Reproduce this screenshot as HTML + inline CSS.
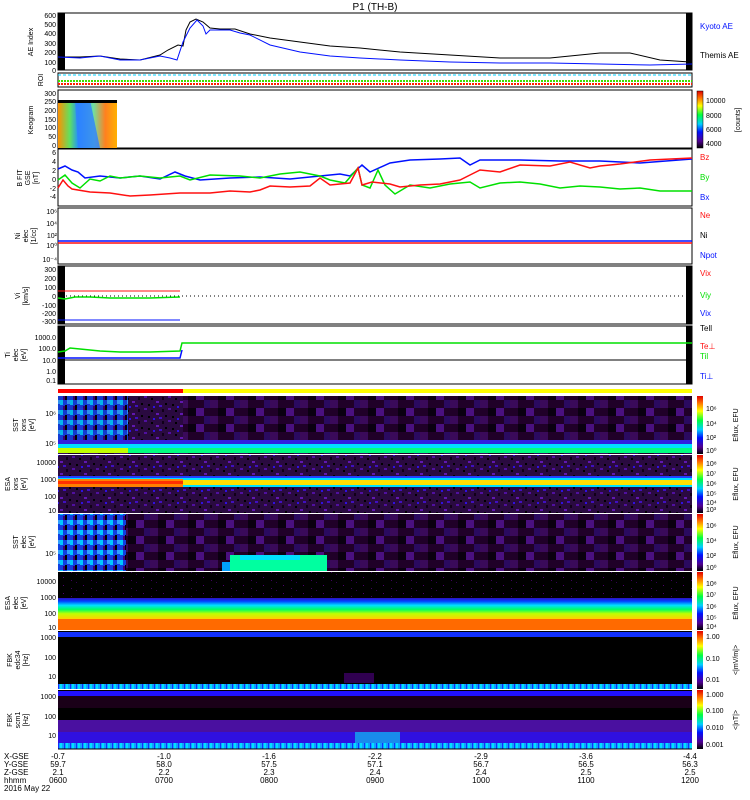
<!DOCTYPE html>
<html><head><style>
body{margin:0;background:#fff;}
svg{display:block;font-family:"Liberation Sans",sans-serif;}
</style></head><body>
<svg width="750" height="800" viewBox="0 0 750 800" xmlns="http://www.w3.org/2000/svg">
<defs>
<pattern id="pn" width="24" height="12" patternUnits="userSpaceOnUse">
<rect width="24" height="12" fill="#2a0a40"/>
<rect x="0" y="0" width="3" height="2" fill="#5010a0"/><rect x="7" y="2" width="2" height="2" fill="#000"/>
<rect x="12" y="5" width="3" height="2" fill="#6018b0"/><rect x="18" y="1" width="2" height="3" fill="#100018"/>
<rect x="4" y="8" width="2" height="2" fill="#000"/><rect x="15" y="9" width="3" height="2" fill="#4010c0"/>
<rect x="21" y="7" width="2" height="2" fill="#000"/><rect x="9" y="10" width="2" height="2" fill="#3010e0"/>
</pattern>
<pattern id="pb" width="30" height="16" patternUnits="userSpaceOnUse">
<rect width="30" height="16" fill="#200028"/>
<rect x="0" y="0" width="8" height="8" fill="#3a0a5a"/><rect x="16" y="8" width="8" height="8" fill="#4a1080"/>
<rect x="8" y="8" width="8" height="8" fill="#0a0010"/><rect x="24" y="0" width="6" height="8" fill="#2a0a60"/>
</pattern>
<pattern id="pc" width="10" height="10" patternUnits="userSpaceOnUse">
<rect width="10" height="10" fill="#1040e0"/><rect x="0" y="0" width="3" height="5" fill="#00c8ff"/>
<rect x="5" y="5" width="2" height="5" fill="#000"/><rect x="7" y="0" width="3" height="4" fill="#30a0ff"/><rect x="3" y="6" width="2" height="4" fill="#40007a"/>
</pattern>
<pattern id="pk" width="20" height="8" patternUnits="userSpaceOnUse">
<rect width="20" height="8" fill="#000"/><rect x="3" y="1" width="1" height="1" fill="#500070"/><rect x="11" y="4" width="1" height="1" fill="#400060"/><rect x="16" y="6" width="1" height="1" fill="#300050"/>
</pattern>
<pattern id="pq" width="6" height="6" patternUnits="userSpaceOnUse">
<rect width="6" height="6" fill="#10a0ff"/><rect x="0" width="2" height="6" fill="#00e0ff"/><rect x="4" width="1" height="6" fill="#1030ff"/>
</pattern>
<linearGradient id="cb" x1="0" y1="1" x2="0" y2="0">
<stop offset="0" stop-color="#000"/><stop offset=".12" stop-color="#500090"/><stop offset=".28" stop-color="#0010ff"/>
<stop offset=".42" stop-color="#00d0ff"/><stop offset=".58" stop-color="#00ff40"/><stop offset=".74" stop-color="#ffff00"/>
<stop offset=".88" stop-color="#ff7000"/><stop offset="1" stop-color="#e00000"/></linearGradient>
<linearGradient id="kg" x1="0" y1="0" x2="1" y2="0">
<stop offset="0" stop-color="#ff9000"/><stop offset=".2" stop-color="#60e060"/><stop offset=".35" stop-color="#2090ff"/><stop offset=".6" stop-color="#70e0a0"/><stop offset=".8" stop-color="#ff8020"/><stop offset="1" stop-color="#ffb000"/></linearGradient>
<linearGradient id="ee" x1="0" y1="0" x2="0" y2="1">
<stop offset="0" stop-color="#3010c0"/><stop offset=".15" stop-color="#0040ff"/><stop offset=".35" stop-color="#00e0ff"/><stop offset=".55" stop-color="#00ff60"/><stop offset=".75" stop-color="#c0ff00"/><stop offset="1" stop-color="#ffd000"/></linearGradient>
</defs>
<text x="375" y="10" font-size="10" text-anchor="middle">P1 (TH-B)</text>

<!-- AE -->
<rect x="58" y="13" width="634" height="57" fill="#fff" stroke="#000"/>
<rect x="58" y="13" width="7" height="57" fill="#000"/><rect x="686" y="13" width="6" height="57" fill="#000"/>
<polyline fill="none" stroke="#000" points="58,57 80,57 100,56 120,59 140,60 160,55 168,50 178,45 183,46 186,30 190,22 196,19 203,22 210,28 220,29 235,29 250,34 270,38 300,42 330,46 360,48 400,52 450,55 500,58 550,58 570,56 600,53 630,53 660,60 690,62"/>
<polyline fill="none" stroke="#0010ff" points="58,57 80,58 100,56 120,60 140,60 160,56 170,58 177,60 183,42 190,28 197,20 203,26 206,34 210,30 230,30 240,33 250,35 270,45 300,52 330,56 360,58 400,60 450,62 500,63 550,63 600,64 650,65 692,64"/>
<text font-size="7" transform="translate(33,42) rotate(-90)" text-anchor="middle">AE Index</text>
<g font-size="7" text-anchor="end"><text x="56" y="18">600</text><text x="56" y="27">500</text><text x="56" y="36">400</text><text x="56" y="46">300</text><text x="56" y="55">200</text><text x="56" y="65">100</text><text x="56" y="73">0</text></g>
<text x="700" y="29" font-size="8" fill="#0010ff">Kyoto AE</text><text x="700" y="58" font-size="8">Themis AE</text>

<!-- ROI -->
<rect x="58" y="73" width="634" height="14" fill="#fff" stroke="#000"/>
<line x1="58" y1="75" x2="692" y2="75" stroke="#00d0ff" stroke-dasharray="3,2"/>
<line x1="58" y1="81" x2="692" y2="81" stroke="#40e000" stroke-width="2" stroke-dasharray="2,1"/>
<line x1="58" y1="84" x2="692" y2="84" stroke="#ff2000" stroke-width="2" stroke-dasharray="2,1"/>
<text font-size="7" transform="translate(43,80) rotate(-90)" text-anchor="middle">ROI</text>

<!-- Keogram -->
<rect x="58" y="90" width="634" height="58" fill="#fff" stroke="#000"/>
<rect x="58" y="100" width="59" height="48" fill="url(#kg)"/>
<path d="M75,100 L90,100 L100,148 L78,148 Z" fill="#3080ff" opacity=".8"/>
<rect x="58" y="100" width="59" height="3" fill="#000"/>
<text font-size="7" transform="translate(33,120) rotate(-90)" text-anchor="middle">Keogram</text>
<g font-size="7" text-anchor="end"><text x="56" y="96">300</text><text x="56" y="104">250</text><text x="56" y="113">200</text><text x="56" y="122">150</text><text x="56" y="130">100</text><text x="56" y="139">50</text><text x="56" y="148">0</text></g>
<rect x="697" y="91" width="6" height="57" fill="url(#cb)" stroke="#000" stroke-width=".5"/>
<g font-size="7"><text x="706" y="103">10000</text><text x="706" y="118">8000</text><text x="706" y="132">6000</text><text x="706" y="146">4000</text></g>
<text font-size="7" transform="translate(740,120) rotate(-90)" text-anchor="middle">[counts]</text>

<!-- B -->
<rect x="58" y="149" width="634" height="57" fill="#fff" stroke="#000"/>
<polyline fill="none" stroke="#0010ff" stroke-width="1.5" points="58,169 65,166 72,170 78,172 85,178 100,176 120,178 140,176 160,179 175,172 185,176 200,180 230,178 260,177 290,179 320,176 340,174 350,176 362,165 370,172 390,163 410,160 440,159 460,158 470,165 480,160 520,160 560,161 600,161 640,163 692,159"/>
<polyline fill="none" stroke="#00e000" stroke-width="1.5" points="58,180 65,175 72,183 80,188 90,179 100,181 110,176 120,178 140,176 160,178 180,176 190,180 210,175 240,176 260,178 280,174 300,172 320,176 330,180 345,183 358,168 362,185 370,188 378,170 385,185 395,194 410,185 430,188 450,184 470,182 480,188 500,183 520,182 540,184 560,188 580,186 600,187 620,189 640,188 660,191 692,191"/>
<polyline fill="none" stroke="#ff1010" stroke-width="1.5" points="58,188 63,180 68,186 72,189 90,192 110,193 130,196 150,195 180,193 210,193 230,191 250,192 260,190 270,186 290,187 310,186 320,178 330,185 350,183 358,168 362,185 372,182 390,184 400,187 420,185 440,184 460,180 470,175 480,170 500,172 520,165 550,166 570,162 590,168 600,166 620,164 650,160 692,158"/>
<text font-size="7" transform="translate(22,178) rotate(-90)" text-anchor="middle">B FIT</text>
<text font-size="7" transform="translate(30,178) rotate(-90)" text-anchor="middle">GSE</text>
<text font-size="7" transform="translate(38,178) rotate(-90)" text-anchor="middle">[nT]</text>
<g font-size="7" text-anchor="end"><text x="56" y="155">6</text><text x="56" y="164">4</text><text x="56" y="173">2</text><text x="56" y="182">0</text><text x="56" y="191">-2</text><text x="56" y="199">-4</text></g>
<text x="700" y="160" font-size="8" fill="#ff1010">Bz</text><text x="700" y="180" font-size="8" fill="#00e000">By</text><text x="700" y="200" font-size="8" fill="#0010ff">Bx</text>

<!-- Ni -->
<rect x="58" y="208" width="634" height="56" fill="#fff" stroke="#000"/>
<line x1="58" y1="241" x2="692" y2="241" stroke="#0010ff" stroke-width="1.5"/>
<line x1="58" y1="243" x2="692" y2="243" stroke="#ff1010" stroke-width="1.5"/>
<text font-size="7" transform="translate(20,236) rotate(-90)" text-anchor="middle">Ni</text>
<text font-size="7" transform="translate(28,236) rotate(-90)" text-anchor="middle">elec</text>
<text font-size="7" transform="translate(36,236) rotate(-90)" text-anchor="middle">[1/cc]</text>
<g font-size="7" text-anchor="end"><text x="57" y="214">10⁶</text><text x="57" y="226">10⁴</text><text x="57" y="238">10²</text><text x="57" y="248">10⁰</text><text x="57" y="262">10⁻⁴</text></g>
<text x="700" y="218" font-size="8" fill="#ff1010">Ne</text><text x="700" y="238" font-size="8">Ni</text><text x="700" y="258" font-size="8" fill="#0010ff">Npot</text>

<!-- Vi -->
<rect x="58" y="266" width="634" height="58" fill="#fff" stroke="#000"/>
<rect x="58" y="266" width="7" height="58" fill="#000"/><rect x="686" y="266" width="6" height="58" fill="#000"/>
<line x1="58" y1="296" x2="692" y2="296" stroke="#000" stroke-dasharray="1,3"/>
<line x1="58" y1="291" x2="180" y2="291" stroke="#ff1010"/>
<polyline fill="none" stroke="#00e000" stroke-width="1.5" points="58,298 65,299 75,297 90,297 110,298 130,298 150,298 180,297"/>
<line x1="58" y1="320" x2="180" y2="320" stroke="#0010ff"/>
<text font-size="7" transform="translate(20,296) rotate(-90)" text-anchor="middle">Vi</text>
<text font-size="7" transform="translate(28,296) rotate(-90)" text-anchor="middle">[km/s]</text>
<g font-size="7" text-anchor="end"><text x="56" y="272">300</text><text x="56" y="281">200</text><text x="56" y="290">100</text><text x="56" y="299">0</text><text x="56" y="308">-100</text><text x="56" y="316">-200</text><text x="56" y="324">-300</text></g>
<text x="700" y="276" font-size="8" fill="#ff1010">Vix</text><text x="700" y="298" font-size="8" fill="#00e000">Viy</text><text x="700" y="316" font-size="8" fill="#0010ff">Vix</text>

<!-- Ti -->
<rect x="58" y="326" width="634" height="58" fill="#fff" stroke="#000"/>
<rect x="58" y="326" width="7" height="58" fill="#000"/><rect x="686" y="326" width="6" height="58" fill="#000"/>
<line x1="58" y1="360" x2="692" y2="360" stroke="#000"/>
<polyline fill="none" stroke="#00e000" stroke-width="1.5" points="58,352 65,351 70,348 80,349 90,350 100,351 120,352 150,352 180,351 182,343 692,343"/>
<polyline fill="none" stroke="#0010ff" stroke-width="1.5" points="58,358 100,358 150,358 180,358 182,350"/>
<text font-size="7" transform="translate(10,355) rotate(-90)" text-anchor="middle">Ti</text>
<text font-size="7" transform="translate(18,355) rotate(-90)" text-anchor="middle">elec</text>
<text font-size="7" transform="translate(26,355) rotate(-90)" text-anchor="middle">[eV]</text>
<g font-size="7" text-anchor="end"><text x="56" y="340">1000.0</text><text x="56" y="351">100.0</text><text x="56" y="363">10.0</text><text x="56" y="374">1.0</text><text x="56" y="383">0.1</text></g>
<text x="700" y="331" font-size="8">Tell</text><text x="700" y="349" font-size="8" fill="#ff1010">Te⊥</text><text x="700" y="359" font-size="8" fill="#00e000">Til</text><text x="700" y="379" font-size="8" fill="#0010ff">Ti⊥</text>

<!-- mode bar -->
<rect x="58" y="389" width="125" height="4" fill="#ff0000"/><rect x="183" y="389" width="509" height="4" fill="#ffff00"/>

<!-- SST ion -->
<rect x="58" y="396" width="634" height="58" fill="url(#pb)"/>
<rect x="58" y="396" width="70" height="50" fill="url(#pc)" opacity=".9"/>
<rect x="128" y="396" width="55" height="50" fill="url(#pn)"/>
<rect x="58" y="440" width="634" height="4" fill="#3020e0"/>
<rect x="58" y="444" width="634" height="4" fill="#00e0ff"/>
<rect x="58" y="448" width="634" height="5" fill="#00ff80"/>
<rect x="58" y="448" width="70" height="5" fill="#c0ff00"/>
<text font-size="7" transform="translate(18,425) rotate(-90)" text-anchor="middle">SST</text>
<text font-size="7" transform="translate(26,425) rotate(-90)" text-anchor="middle">ions</text>
<text font-size="7" transform="translate(34,425) rotate(-90)" text-anchor="middle">[eV]</text>
<g font-size="7" text-anchor="end"><text x="56" y="416">10⁶</text><text x="56" y="446">10⁵</text></g>
<!-- ESA ion -->
<rect x="58" y="455" width="634" height="58" fill="url(#pn)"/>
<rect x="58" y="476" width="634" height="2" fill="#2040ff"/>
<rect x="58" y="478" width="634" height="2" fill="#00e0ff"/>
<rect x="58" y="480" width="634" height="5" fill="#ffe000"/>
<rect x="58" y="485" width="634" height="2" fill="#00e0ff"/>
<rect x="58" y="479" width="125" height="8" fill="#ff8000"/>
<rect x="58" y="481" width="125" height="3" fill="#ff3000"/>
<text font-size="7" transform="translate(10,484) rotate(-90)" text-anchor="middle">ESA</text>
<text font-size="7" transform="translate(18,484) rotate(-90)" text-anchor="middle">ions</text>
<text font-size="7" transform="translate(26,484) rotate(-90)" text-anchor="middle">[eV]</text>
<g font-size="7" text-anchor="end"><text x="56" y="465">10000</text><text x="56" y="482">1000</text><text x="56" y="499">100</text><text x="56" y="513">10</text></g>
<!-- SST elec -->
<rect x="58" y="514" width="634" height="57" fill="url(#pb)"/>
<rect x="58" y="514" width="68" height="57" fill="url(#pc)"/>
<rect x="222" y="562" width="10" height="9" fill="#00a0ff"/>
<rect x="230" y="555" width="97" height="16" fill="#00ffa0"/>
<rect x="240" y="555" width="60" height="5" fill="#00e0ff"/>
<text font-size="7" transform="translate(18,542) rotate(-90)" text-anchor="middle">SST</text>
<text font-size="7" transform="translate(26,542) rotate(-90)" text-anchor="middle">elec</text>
<text font-size="7" transform="translate(34,542) rotate(-90)" text-anchor="middle">[eV]</text>
<text x="56" y="556" font-size="7" text-anchor="end">10⁵</text>
<!-- ESA elec -->
<rect x="58" y="572" width="634" height="58" fill="url(#pk)"/>
<rect x="58" y="598" width="634" height="21" fill="url(#ee)"/>
<rect x="58" y="619" width="634" height="11" fill="#ff6a00"/>
<text font-size="7" transform="translate(10,603) rotate(-90)" text-anchor="middle">ESA</text>
<text font-size="7" transform="translate(18,603) rotate(-90)" text-anchor="middle">elec</text>
<text font-size="7" transform="translate(26,603) rotate(-90)" text-anchor="middle">[eV]</text>
<g font-size="7" text-anchor="end"><text x="56" y="584">10000</text><text x="56" y="600">1000</text><text x="56" y="616">100</text><text x="56" y="630">10</text></g>
<!-- FBK1 -->
<rect x="58" y="631" width="634" height="58" fill="#000"/>
<rect x="58" y="632" width="634" height="5" fill="#1030ff"/>
<rect x="58" y="684" width="634" height="5" fill="url(#pq)"/>
<rect x="344" y="673" width="30" height="10" fill="#300050"/>
<text font-size="7" transform="translate(12,660) rotate(-90)" text-anchor="middle">FBK</text>
<text font-size="7" transform="translate(20,660) rotate(-90)" text-anchor="middle">edc34</text>
<text font-size="7" transform="translate(28,660) rotate(-90)" text-anchor="middle">[Hz]</text>
<g font-size="7" text-anchor="end"><text x="56" y="640">1000</text><text x="56" y="660">100</text><text x="56" y="679">10</text></g>
<!-- FBK2 -->
<rect x="58" y="690" width="634" height="59" fill="#000"/>
<rect x="58" y="691" width="634" height="5" fill="#2010ff"/>
<rect x="58" y="696" width="634" height="12" fill="#1a0018"/>
<rect x="58" y="720" width="634" height="12" fill="#4a10a0"/>
<rect x="58" y="732" width="634" height="11" fill="#3010e0"/>
<rect x="58" y="743" width="634" height="6" fill="url(#pq)"/>
<rect x="355" y="732" width="45" height="11" fill="#10c0f0" opacity=".7"/>
<text font-size="7" transform="translate(12,720) rotate(-90)" text-anchor="middle">FBK</text>
<text font-size="7" transform="translate(20,720) rotate(-90)" text-anchor="middle">scm1</text>
<text font-size="7" transform="translate(28,720) rotate(-90)" text-anchor="middle">[Hz]</text>
<g font-size="7" text-anchor="end"><text x="56" y="699">1000</text><text x="56" y="719">100</text><text x="56" y="738">10</text></g>

<!-- colorbars -->
<rect x="697" y="396" width="6" height="58" fill="url(#cb)"/>
<rect x="697" y="455" width="6" height="58" fill="url(#cb)"/>
<rect x="697" y="514" width="6" height="57" fill="url(#cb)"/>
<rect x="697" y="572" width="6" height="58" fill="url(#cb)"/>
<rect x="697" y="631" width="6" height="58" fill="url(#cb)"/>
<rect x="697" y="690" width="6" height="59" fill="url(#cb)"/>
<g font-size="7">
<text x="706" y="411">10⁶</text><text x="706" y="426">10⁴</text><text x="706" y="440">10²</text><text x="706" y="453">10⁰</text>
<text x="706" y="466">10⁸</text><text x="706" y="476">10⁷</text><text x="706" y="486">10⁶</text><text x="706" y="496">10⁵</text><text x="706" y="505">10⁴</text><text x="706" y="512">10³</text>
<text x="706" y="528">10⁶</text><text x="706" y="543">10⁴</text><text x="706" y="558">10²</text><text x="706" y="570">10⁰</text>
<text x="706" y="586">10⁸</text><text x="706" y="597">10⁷</text><text x="706" y="609">10⁶</text><text x="706" y="620">10⁵</text><text x="706" y="629">10⁴</text>
<text x="706" y="639">1.00</text><text x="706" y="661">0.10</text><text x="706" y="682">0.01</text>
<text x="706" y="697">1.000</text><text x="706" y="713">0.100</text><text x="706" y="730">0.010</text><text x="706" y="747">0.001</text>
</g>
<g font-size="7">
<text transform="translate(738,425) rotate(-90)" text-anchor="middle">Eflux, EFU</text>
<text transform="translate(738,484) rotate(-90)" text-anchor="middle">Eflux, EFU</text>
<text transform="translate(738,542) rotate(-90)" text-anchor="middle">Eflux, EFU</text>
<text transform="translate(738,603) rotate(-90)" text-anchor="middle">Eflux, EFU</text>
<text transform="translate(738,660) rotate(-90)" text-anchor="middle">&lt;|mV/m|&gt;</text>
<text transform="translate(738,720) rotate(-90)" text-anchor="middle">&lt;|nT|&gt;</text>
</g>
<line x1="58" y1="749" x2="692" y2="749" stroke="#000"/>

<!-- bottom labels -->
<g font-size="8">
<text x="4" y="759">X-GSE</text><text x="4" y="767">Y-GSE</text><text x="4" y="775">Z-GSE</text><text x="4" y="783">hhmm</text><text x="4" y="791">2016 May 22</text>
</g>
<g font-size="8" text-anchor="middle">
<text x="58" y="759">-0.7</text><text x="58" y="767">59.7</text><text x="58" y="775">2.1</text><text x="58" y="783">0600</text>
<text x="164" y="759">-1.0</text><text x="164" y="767">58.0</text><text x="164" y="775">2.2</text><text x="164" y="783">0700</text>
<text x="269" y="759">-1.6</text><text x="269" y="767">57.5</text><text x="269" y="775">2.3</text><text x="269" y="783">0800</text>
<text x="375" y="759">-2.2</text><text x="375" y="767">57.1</text><text x="375" y="775">2.4</text><text x="375" y="783">0900</text>
<text x="481" y="759">-2.9</text><text x="481" y="767">56.7</text><text x="481" y="775">2.4</text><text x="481" y="783">1000</text>
<text x="586" y="759">-3.6</text><text x="586" y="767">56.5</text><text x="586" y="775">2.5</text><text x="586" y="783">1100</text>
<text x="690" y="759">-4.4</text><text x="690" y="767">56.3</text><text x="690" y="775">2.5</text><text x="690" y="783">1200</text>
</g>
</svg>
</body></html>
